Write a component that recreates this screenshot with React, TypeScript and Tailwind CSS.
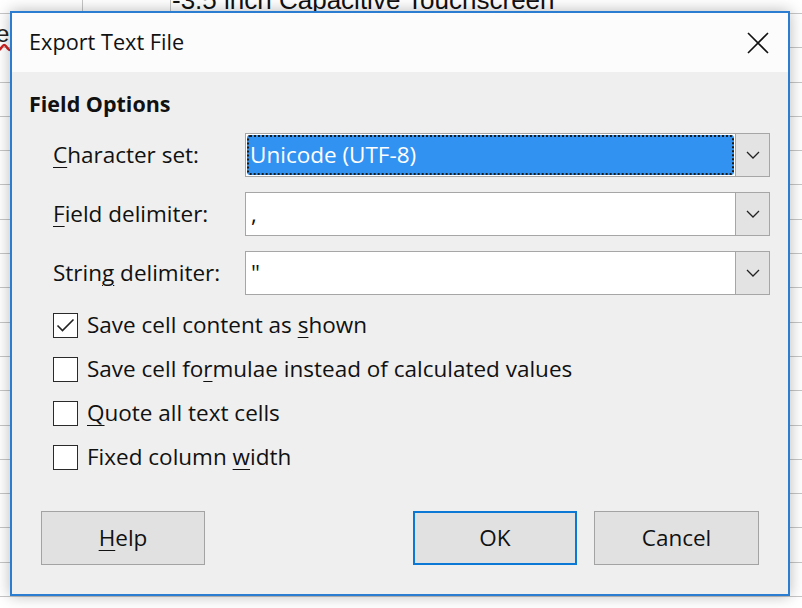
import React from "react";

const font = { fontFamily: '"Open Sans", "Noto Sans", sans-serif' };

function Chevron() {
  return (
    <svg width="14" height="8" viewBox="0 0 14 8" fill="none">
      <path d="M1 1 L7 7 L13 1" stroke="#222" strokeWidth="1.3" />
    </svg>
  );
}

function Combo({ value, selected }: { value: string; selected?: boolean }) {
  return (
    <div className="flex h-[44px] flex-1 border border-[#a6a6a6] bg-white">
      {selected ? (
        <div className="flex flex-1 items-center p-[1px]">
          <div className="flex h-full flex-1 items-center rounded-[3px] border-[2px] border-dotted border-[#1a1a1a] bg-[#3192f2] pl-[1px] text-[22.5px] text-white">
            {value}
          </div>
        </div>
      ) : (
        <div className="flex flex-1 items-center pl-[5px] text-[22.5px] text-[#111]">{value}</div>
      )}
      <div className="flex w-[34px] items-center justify-center border-l border-[#a6a6a6] bg-[#e3e3e3]">
        <Chevron />
      </div>
    </div>
  );
}

function Check({ checked, children }: { checked?: boolean; children: React.ReactNode }) {
  return (
    <div className="flex h-[25px] items-center gap-[9px]">
      <div className="flex h-[25px] w-[25px] items-center justify-center border-[1.5px] border-[#2a2a2a] bg-white">
        {checked && (
          <svg width="19" height="15" viewBox="0 0 19 15" fill="none">
            <path d="M1.5 7.5 L6.5 12.5 L17.5 1.5" stroke="#222" strokeWidth="1.6" />
          </svg>
        )}
      </div>
      <span className="text-[22.5px] leading-none text-[#111]">{children}</span>
    </div>
  );
}

function Btn({ children, primary, w }: { children: React.ReactNode; primary?: boolean; w: string }) {
  return (
    <div
      className={`flex h-[54px] items-center justify-center bg-[#e1e1e1] text-[22.5px] text-[#111] ${w} ${
        primary ? "border-[2px] border-[#0a78d4]" : "border border-[#a3a3a3]"
      }`}
    >
      {children}
    </div>
  );
}

const U = ({ children }: { children: React.ReactNode }) => (
  <span className="underline decoration-1 underline-offset-[4px]">{children}</span>
);

export default function App() {
  const rows = Array.from({ length: 17 });
  return (
    <div className="relative h-[608px] w-[802px] overflow-hidden bg-white" style={font}>
      {/* spreadsheet background */}
      <div className="flex flex-col">
        <div className="flex h-[14px] border-b border-[#c6c6c6]">
          <div className="w-[83px] border-r border-[#c6c6c6]" />
          <div className="w-[88px] border-r border-[#c6c6c6]" />
          <div className="relative flex-1">
            <span
              className="absolute left-[1px] top-[-13px] whitespace-nowrap text-[26px] leading-none text-[#111]"
              style={{ fontFamily: '"Liberation Sans", Arial, sans-serif' }}
            >
              -3.5 inch Capacitive Touchscreen
            </span>
          </div>
        </div>
        {rows.map((_, i) => (
          <div key={i} className="flex h-[34.3px] border-b border-[#c6c6c6]">
            <div className="relative w-[83px] border-r border-[#c6c6c6]">
              {i === 0 && (
                <span
                  className="absolute left-[-4px] top-[8px] text-[24px] leading-none text-[#222] underline decoration-wavy decoration-[#d02020]"
                  style={{ fontFamily: '"Liberation Sans", Arial, sans-serif' }}
                >
                  el
                </span>
              )}
            </div>
            <div className="w-[88px] border-r border-[#c6c6c6]" />
            <div className="flex-1" />
          </div>
        ))}
      </div>

      {/* dialog window */}
      <div className="absolute left-[10px] top-[11px] flex h-[585px] w-[780px] flex-col border-[2px] border-[#2a7dd1] bg-[#efefef] shadow-[0_0_14px_rgba(0,0,0,0.28)]">
        <div className="flex h-[59px] items-center justify-between bg-[#fcfcfc] pl-[17px] pr-[19px]">
          <span className="text-[21.7px] text-[#111]">Export Text File</span>
          <svg width="22" height="22" viewBox="0 0 22 22" fill="none">
            <path d="M1 1 L21 21 M21 1 L1 21" stroke="#111" strokeWidth="1.6" />
          </svg>
        </div>

        <div className="flex flex-1 flex-col pl-[17px] pr-[18px] pt-[18px]">
          <div className="h-[28px] text-[21.5px] font-bold leading-[28px] text-[#111]">Field Options</div>

          <div className="mt-[15px] flex flex-col gap-[15px] pl-[24px]">
            <div className="flex items-center">
              <div className="w-[192px] text-[22.5px] text-[#111]">
                <U>C</U>haracter set:
              </div>
              <Combo value="Unicode (UTF-8)" selected />
            </div>
            <div className="flex items-center">
              <div className="w-[192px] text-[22.5px] text-[#111]">
                <U>F</U>ield delimiter:
              </div>
              <Combo value="," />
            </div>
            <div className="flex items-center">
              <div className="w-[192px] text-[22.5px] text-[#111]">
                Strin<U>g</U> delimiter:
              </div>
              <Combo value={'"'} />
            </div>
          </div>

          <div className="mt-[18px] flex flex-col gap-[19px] pl-[24px]">
            <Check checked>
              Save cell content as <U>s</U>hown
            </Check>
            <Check>
              Save cell fo<U>r</U>mulae instead of calculated values
            </Check>
            <Check>
              <U>Q</U>uote all text cells
            </Check>
            <Check>
              Fixed column <U>w</U>idth
            </Check>
          </div>

          <div className="mt-[41px] flex items-center pl-[12px] pr-[11px]">
            <Btn w="w-[164px]">
              <U>H</U>elp
            </Btn>
            <div className="flex-1" />
            <Btn primary w="w-[164px]">
              OK
            </Btn>
            <div className="w-[17px]" />
            <Btn w="w-[165px]">Cancel</Btn>
          </div>
        </div>
      </div>
    </div>
  );
}
